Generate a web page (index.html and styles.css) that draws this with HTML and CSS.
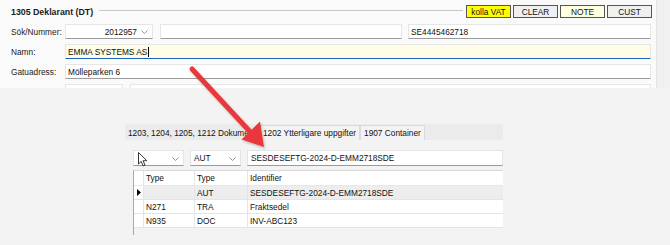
FILE: index.html
```html
<!DOCTYPE html>
<html>
<head>
<meta charset="utf-8">
<link rel="stylesheet" href="styles.css">
</head>
<body>
<div class="page">
  <div class="top">
    <div class="form">
      <div class="head">
        <span class="title">1305 Deklarant (DT)</span>
        <span class="rule"></span>
        <div class="btns">
          <span class="btn vat">kolla VAT</span>
          <span class="btn">CLEAR</span>
          <span class="btn note">NOTE</span>
          <span class="btn">CUST</span>
        </div>
      </div>
      <div class="row r1">
        <span class="lbl">Sök/Nummer:</span>
        <span class="inp combo num">2012957<svg class="chev" width="7" height="4" viewBox="0 0 7 4"><path d="M0.5 0.5 L3.5 3.5 L6.5 0.5" fill="none" stroke="#888" stroke-width="0.9"/></svg></span>
        <span class="inp mid"></span>
        <span class="inp vatno">SE4445462718</span>
      </div>
      <div class="row r2">
        <span class="lbl">Namn:</span>
        <span class="inp full active">EMMA SYSTEMS AS<span class="caret"></span></span>
      </div>
      <div class="row r3">
        <span class="lbl">Gatuadress:</span>
        <span class="inp full">Mölleparken 6</span>
      </div>
      <div class="row r4">
        <span class="lbl">Postort/Land:</span>
        <span class="inp zip"></span>
        <span class="inp city"></span>
      </div>
    </div>
    <div class="scroll"></div>
  </div>
  <div class="bottom">
    <div class="tabs">
      <span class="tab sel">1203, 1204, 1205, 1212 Dokume</span>
      <span class="tab">1202 Ytterligare uppgifter</span>
      <span class="tab">1907 Container</span>
    </div>
    <div class="ctrls">
      <span class="box c1"><svg class="ptr" width="10" height="15" viewBox="0 0 10 15"><path d="M0.5 0.5 L0.5 12 L3.2 9.4 L5.2 14 L7 13.2 L5.1 8.7 L8.8 8.7 Z" fill="#fff" stroke="#222" stroke-width="0.9" stroke-linejoin="round"/></svg><svg class="chev" width="7" height="4" viewBox="0 0 7 4"><path d="M0.5 0.5 L3.5 3.5 L6.5 0.5" fill="none" stroke="#888" stroke-width="0.9"/></svg></span>
      <span class="box c2">AUT<svg class="chev" width="7" height="4" viewBox="0 0 7 4"><path d="M0.5 0.5 L3.5 3.5 L6.5 0.5" fill="none" stroke="#888" stroke-width="0.9"/></svg></span>
      <span class="box c3">SESDESEFTG-2024-D-EMM2718SDE</span>
    </div>
    <div class="grid">
      <div class="gr hdr"><span class="rh"></span><span class="cell a">Type</span><span class="cell b">Type</span><span class="cell c">Identifier</span></div>
      <div class="gr cur"><span class="rh"><svg width="4" height="7" viewBox="0 0 4 7"><path d="M0 0 L4 3.5 L0 7 Z" fill="#000"/></svg></span><span class="cell a"></span><span class="cell b">AUT</span><span class="cell c">SESDESEFTG-2024-D-EMM2718SDE</span></div>
      <div class="gr"><span class="rh"></span><span class="cell a">N271</span><span class="cell b">TRA</span><span class="cell c">Fraktsedel</span></div>
      <div class="gr"><span class="rh"></span><span class="cell a">N935</span><span class="cell b">DOC</span><span class="cell c">INV-ABC123</span></div>
      <div class="gfill"><span class="rh"></span></div>
    </div>
  </div>
  <svg class="arrow" width="670" height="245" viewBox="0 0 670 245">
    <defs>
      <filter id="sh" x="-20%" y="-20%" width="140%" height="140%">
        <feDropShadow dx="1" dy="1.5" stdDeviation="1.2" flood-color="#000" flood-opacity="0.25"/>
      </filter>
    </defs>
    <g filter="url(#sh)">
      <line x1="192" y1="69" x2="254" y2="136" stroke="#e8393d" stroke-width="5" stroke-linecap="round"/>
      <polygon points="264,147 241.5,139.5 260,121.5" fill="#e8393d"/>
    </g>
  </svg>
</div>
</body>
</html>
```
FILE: styles.css
```css
* { box-sizing: border-box; }
html, body { margin: 0; padding: 0; }
body {
  width: 670px;
  height: 245px;
  overflow: hidden;
  font-family: "Liberation Sans", Arial, sans-serif;
  font-size: 8.3px;
  color: #111;
  background: #f3f3f3;
}
.page {
  position: relative;
  width: 670px;
  height: 245px;
  display: flex;
  flex-direction: column;
}
.top {
  height: 88px;
  display: flex;
  background: #fafafa;
  overflow: hidden;
}
.form {
  width: 656px;
  padding: 5px 0 0 11px;
  display: flex;
  flex-direction: column;
}
.scroll {
  flex: 1;
  background: #f0f0f0;
  border-left: 1px solid #e4e4e4;
}
.head {
  height: 13px;
  display: flex;
  align-items: center;
}
.title {
  font-weight: bold;
  font-size: 8.8px;
  color: #1a1a1a;
}
.rule {
  flex: 1;
  height: 1px;
  margin: 0 3px 0 6px;
  background: #c8c8c8;
  position: relative;
  top: -1px;
}
.btns {
  display: flex;
  gap: 2px;
  margin-right: 4px;
}
.btn {
  width: 45px;
  height: 13px;
  border: 1px solid #555;
  background: #f0f0f0;
  display: flex;
  align-items: center;
  justify-content: center;
  font-size: 8.3px;
  color: #111;
}
.btn.vat { background: #ffff00; }
.btn.note { background: #ffffe0; }
.row {
  display: flex;
  align-items: center;
  height: 15px;
  margin-top: 5px;
}
.r1 { margin-top: 6px; }
.lbl {
  width: 54px;
  color: #222;
  white-space: nowrap;
  overflow: hidden;
}
.inp {
  height: 15px;
  background: #fff;
  border: 1px solid #e6e6e6;
  border-bottom: 1px solid #9a9a9a;
  display: flex;
  align-items: center;
  padding-left: 2px;
  white-space: nowrap;
  border-radius: 1px;
}
.combo { width: 88px; justify-content: flex-end; padding-right: 4px; }
.combo .chev { margin-left: 4px; }
.mid { width: 242px; margin-left: 7px; }
.vatno { width: 243px; margin-left: 6px; }
.full { width: 586px; }
.active { background: #fffde6; border-bottom: 1px solid #1c62c0; }
.caret {
  display: inline-block;
  width: 1px;
  height: 10px;
  background: #000;
  margin-left: 1px;
}
.zip { width: 58px; }
.city { width: 521px; margin-left: 7px; }
.r4 { align-items: flex-start; }
.r4 .lbl { padding-top: 3px; }

.bottom {
  flex: 1;
  background: #f3f3f3;
  padding-left: 125px;
  padding-top: 36px;
}
.tabs {
  width: 378px;
  height: 16px;
  background: #ebebeb;
  display: flex;
  align-items: stretch;
  padding-top: 1px;
}
.tab {
  display: flex;
  align-items: center;
  padding: 0 3px;
  border: 1px solid #dadada;
  border-bottom: none;
  background: #f3f3f3;
  color: #111;
  white-space: nowrap;
}
.tab.sel {
  border: none;
  background: transparent;
  width: 134px;
  padding-left: 3px;
  overflow: hidden;
}
.ctrls {
  display: flex;
  margin-top: 10px;
  margin-left: 8px;
  height: 16px;
  gap: 6px;
}
.box {
  height: 16px;
  background: #fff;
  border: 1px solid #e4e4e4;
  border-bottom: 1px solid #9a9a9a;
  display: flex;
  align-items: center;
  padding-left: 3px;
  position: relative;
  white-space: nowrap;
}
.box .chev { position: absolute; right: 4px; top: 6px; }
.c1 { width: 51px; padding-left: 4px; }
.c1 .ptr { position: relative; top: 1px; }
.c2 { width: 51px; }
.c3 { width: 256px; }
.grid {
  margin-top: 4px;
  margin-left: 8px;
  width: 370px;
  border-left: 1px solid #a8a8a8;
  border-top: 1px solid #d8d8d8;
}
.gr {
  display: flex;
  height: 14px;
  background: #fff;
  border-bottom: 1px solid #e4e4e4;
}
.gr.cur { background: #ededed; }
.gr.hdr { height: 15px; background: #fff; border-bottom: 1px solid #e8e8e8; }
.rh {
  width: 10px;
  display: flex;
  align-items: center;
  justify-content: center;
  background: #fff;
  border-right: 1px solid #e4e4e4;
}
.cell {
  display: flex;
  align-items: center;
  padding-left: 2px;
  border-right: 1px solid #e4e4e4;
  white-space: nowrap;
  overflow: hidden;
}
.cell.a { width: 51px; }
.cell.b { width: 53px; }
.cell.c { flex: 1; border-right: none; }
.gfill { height: 7px; display: flex; }
.gfill .rh { background: transparent; border-right: none; }
.arrow {
  position: absolute;
  left: 0;
  top: 0;
  pointer-events: none;
}
```
